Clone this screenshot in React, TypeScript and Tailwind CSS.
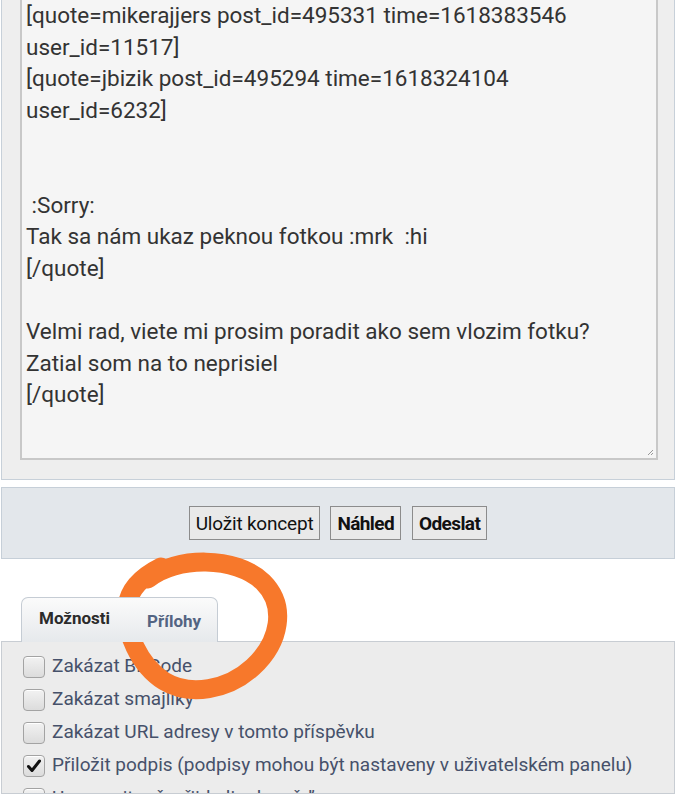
import React from "react";

const lines = [
  "[quote=mikerajjers post_id=495331 time=1618383546",
  "user_id=11517]",
  "[quote=jbizik post_id=495294 time=1618324104",
  "user_id=6232]",
  "",
  "",
  " :Sorry:",
  "Tak sa nám ukaz peknou fotkou :mrk  :hi",
  "[/quote]",
  "",
  "Velmi rad, viete mi prosim poradit ako sem vlozim fotku?",
  "Zatial som na to neprisiel",
  "[/quote]",
];

const options = [
  { label: "Zakázat BBCode", checked: false },
  { label: "Zakázat smajlíky", checked: false },
  { label: "Zakázat URL adresy v tomto příspěvku", checked: false },
  { label: "Přiložit podpis (podpisy mohou být nastaveny v uživatelském panelu)", checked: true },
  { label: "Upozornit mě, přijde-li odpověď", checked: false },
];

function Checkbox({ checked }: { checked: boolean }) {
  return (
    <div className="w-[22px] h-[22px] shrink-0 rounded-[4px] border border-[#a3a3a3] bg-gradient-to-b from-[#f2f2f2] to-[#dcdcdc] flex items-center justify-center shadow-[inset_0_1px_0_#fff]">
      {checked && (
        <svg width="16" height="16" viewBox="0 0 16 16">
          <path d="M2.5 8.5 L6 12.5 L13.5 3" fill="none" stroke="#111" strokeWidth="3" strokeLinecap="round" strokeLinejoin="round" />
        </svg>
      )}
    </div>
  );
}

export default function App() {
  return (
    <div className="relative w-[676px] h-[800px] overflow-hidden bg-white" style={{ fontFamily: "Roboto, 'Noto Sans', sans-serif" }}>
      {/* editor panel */}
      <div className="ml-[1px] mr-[1px] h-[480px] bg-[#eeeeee] border-x border-b border-[#c7d0d9] pl-[18px] pr-[16px]">
        <div className="relative h-[460px] bg-[#f5f5f5] border-x-2 border-b-2 border-[#c8c8c8] pl-[4px] pt-[0px] text-[22.5px] leading-[31.6px] text-[#333333]">
          {lines.map((l, i) => (
            <div key={i} className="whitespace-pre h-[31.6px]">{l}</div>
          ))}
          <svg className="absolute right-[2px] bottom-[2px]" width="8" height="8" viewBox="0 0 8 8">
            <path d="M7 2 L2 7 M7 5 L5 7" stroke="#999" strokeWidth="1" />
          </svg>
        </div>
      </div>

      {/* buttons panel */}
      <div className="mt-[7px] mx-[1px] h-[72px] bg-[#e3e7eb] border border-[#c6cfd8] flex items-center justify-center text-[19px] text-[#111]">
        <div className="flex items-center">
          <button className="h-[34px] px-[6px] bg-[#e9e9e9] border border-[#8c8c8c] leading-none tracking-[-0.2px]">Uložit koncept</button>
          <button className="ml-[10px] h-[34px] px-[6px] bg-[#e9e9e9] border border-[#8c8c8c] font-bold leading-none tracking-[-0.6px]">Náhled</button>
          <button className="ml-[11px] h-[34px] px-[6px] bg-[#e9e9e9] border border-[#8c8c8c] font-bold leading-none tracking-[-0.6px]">Odeslat</button>
        </div>
      </div>

      {/* tabs */}
      <div className="mt-[38px] pl-[21px] flex items-end h-[45px] relative z-10">
        <div className="h-[45px] w-[197px] rounded-t-[7px] border border-b-0 border-[#c5ccd4] bg-gradient-to-b from-[#fbfbfb] to-[#e6e9ec] flex items-start text-[17px] font-bold">
          <span className="pl-[17px] pt-[8px] text-[#2b2b2b]">Možnosti</span>
          <span className="pl-[37px] pt-[11px] text-[#536482]">Přílohy</span>
        </div>
      </div>

      {/* options panel */}
      <div className="-mt-[1px] mx-[1px] h-[153px] bg-[#ececec] border border-[#c8cdd3] overflow-hidden pt-[8px] pl-[21px]">
        {options.map((o, i) => (
          <div key={i} className="flex items-center h-[33px] gap-[7px]">
            <Checkbox checked={o.checked} />
            <span className="text-[19px] text-[#46516a] whitespace-nowrap">{o.label}</span>
          </div>
        ))}
      </div>

      {/* orange annotation */}
      <svg className="absolute left-0 top-0 pointer-events-none" width="676" height="800" viewBox="0 0 676 800">
        <path
          d="M148 579 C176 556 236 556 263 582 C287 606 280 642 253 667 C228 690 190 697 164 681 C139 665 124 631 127 606 C129 590 141 577 161 567"
          fill="none"
          stroke="#f7782b"
          strokeWidth="19"
          strokeLinecap="round"
          strokeLinejoin="round"
        />
      </svg>
    </div>
  );
}
